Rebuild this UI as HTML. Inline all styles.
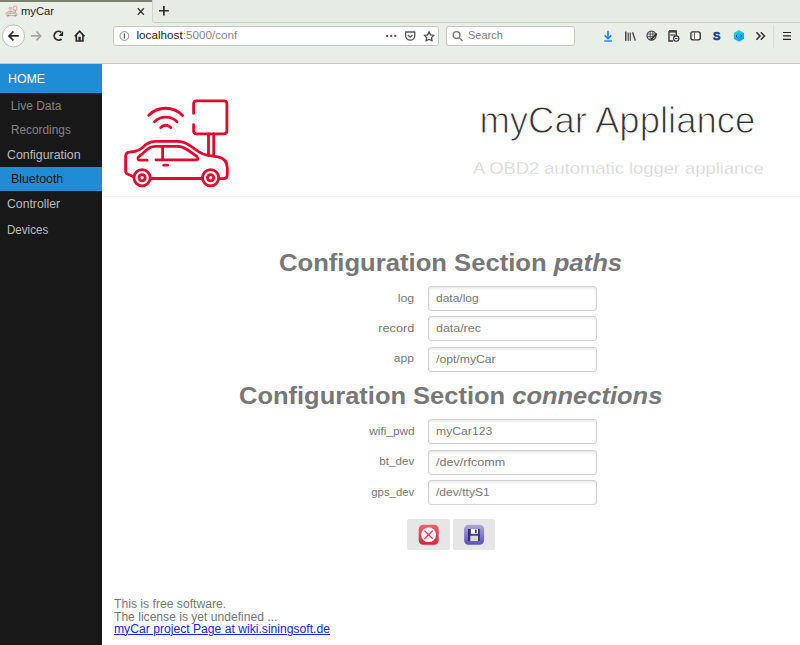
<!DOCTYPE html>
<html><head><meta charset="utf-8">
<style>
*{margin:0;padding:0;box-sizing:border-box}
html,body{width:800px;height:645px;overflow:hidden;background:#fff;font-family:"Liberation Sans",sans-serif}
.a{position:absolute}
.t{position:absolute;white-space:nowrap;line-height:1;transform-origin:0 0}
#chrome{left:0;top:0;width:800px;height:64px;background:#e9eee7}
#topline{left:0;top:0;width:153px;height:2px;background:#78826f}
#tabline{left:152px;top:-2px;width:650px;height:25px;background:#e6ebe4;border-left:1px solid #d2d5cf;border-bottom:1px solid #c9cdc6;border-bottom-left-radius:3px}
#tbline{left:0;top:63px;width:800px;height:1px;background:#c9cac5}
.box{position:absolute;background:#fff;border:1px solid #c5c7c2;border-radius:3px}
#menu{left:0;top:64px;width:102px;height:581px;background:#191818}
.blue{position:absolute;background:#1f8dd6;left:0;width:102px}
.mi{color:#858585}
.inp{position:absolute;left:428px;width:169px;height:25px;border:1px solid #d2d2d2;border-radius:3px;box-shadow:inset 0 1px 3px #e2e2e2;background:#fff}
.lbl{color:#777}
.val{color:#777}
.btn{position:absolute;top:519px;height:31px;background:#e6e6e6;border-radius:2px}
</style></head>
<body>
<div id="chrome" class="a"></div>
<div id="topline" class="a"></div>
<div id="tabline" class="a"></div>
<div id="tbline" class="a"></div>

<!-- tab -->
<div class="box" style="left:113px;top:26px;width:326px;height:20px"></div>
<div class="box" style="left:446px;top:26px;width:129px;height:20px"></div>

<div class="t" style="left:21.4px;top:7.1px;font-size:10px;color:#1c1c1c;transform:scaleX(1.12)">myCar</div>
<svg class="a" style="left:0;top:0" width="800" height="64" viewBox="0 0 800 64">
<g fill="none" stroke="#333" stroke-width="1.3" stroke-linecap="butt">
<path d="M137.8 8.3 L143.9 14.8 M143.9 8.3 L137.8 14.8"/>
</g>
<g fill="none" stroke="#2e2e2e" stroke-width="1.7">
<path d="M163.9 5.9 V15.6 M159 10.75 H168.8"/>
</g>
<!-- back -->
<circle cx="13.5" cy="35.9" r="11.1" fill="#fdfdfd" stroke="#babdb8" stroke-width="1"/>
<g fill="none" stroke="#2b2b2b" stroke-width="1.7" stroke-linecap="butt" stroke-linejoin="miter">
<path d="M9 35.9 H18.8 M13.4 31.5 L9 35.9 L13.4 40.3"/>
</g>
<g fill="none" stroke="#a3a5a1" stroke-width="1.7">
<path d="M30.9 35.9 H40.6 M36.5 31.5 L40.6 35.9 L36.5 40.3"/>
</g>
<!-- reload -->
<path d="M61.3 32.3 A4.4 4.4 0 1 0 61.6 39" fill="none" stroke="#2b2b2b" stroke-width="1.8"/>
<path d="M58.6 35.9 H63.1 V31 Z" fill="#2b2b2b"/>
<!-- home -->
<path d="M74.8 36.3 L79.6 31.2 L84.4 36.3" fill="none" stroke="#2b2b2b" stroke-width="1.7" stroke-linejoin="miter"/>
<path d="M76.3 35 V41 H82.9 V35" fill="none" stroke="#2b2b2b" stroke-width="1.7"/>
<rect x="78.4" y="36.8" width="2.4" height="4" fill="#2b2b2b"/>
<!-- info -->
<circle cx="124.4" cy="36" r="4.4" fill="none" stroke="#8a8a8a" stroke-width="1"/>
<path d="M124.4 33.6 V38.6" stroke="#555" stroke-width="1.2"/>
<!-- dots -->
<g fill="#4a4a4a"><circle cx="387.1" cy="35.9" r="1.15"/><circle cx="391.2" cy="35.9" r="1.15"/><circle cx="395.3" cy="35.9" r="1.15"/></g>
<!-- pocket -->
<path d="M405.6 32 H414.8 V35.5 A4.6 4.6 0 0 1 405.6 35.5 Z" fill="none" stroke="#555" stroke-width="1.3" stroke-linejoin="round"/>
<path d="M407.9 35 L410.2 37.2 L412.5 35" fill="none" stroke="#555" stroke-width="1.3"/>
<!-- star -->
<path d="M429.1 31.8 L430.6 34.9 L433.9 35.3 L431.5 37.6 L432.1 40.9 L429.1 39.3 L426.1 40.9 L426.7 37.6 L424.3 35.3 L427.6 34.9 Z" fill="none" stroke="#4e4e4e" stroke-width="1.3" stroke-linejoin="round"/>
<!-- search magnifier -->
<circle cx="456.6" cy="35.1" r="3.4" fill="none" stroke="#777" stroke-width="1.3"/>
<path d="M459.1 37.6 L462.6 41" stroke="#777" stroke-width="1.4"/>
<!-- download -->
<g fill="none" stroke="#1e88ff" stroke-width="1.6">
<path d="M608 30.8 V38.6 M604.7 35.4 L608 38.7 L611.3 35.4"/>
<path d="M604.2 41 H612" stroke-width="1.5"/>
</g>
<!-- library -->
<g fill="#454545">
<rect x="625" y="31.5" width="1.5" height="9.3"/>
<rect x="627.6" y="32.5" width="1.3" height="8.3" fill="#5a5a5a"/>
<rect x="629.7" y="32.5" width="1.3" height="8.3" fill="#5a5a5a"/>
</g>
<path d="M632.6 32.3 L635.3 40.6" stroke="#454545" stroke-width="1.4"/>
<!-- globe/pencil -->
<circle cx="651.5" cy="35.6" r="4.5" fill="none" stroke="#444" stroke-width="1.3"/>
<path d="M647.2 34 H655 M647.2 36.6 H653 M650.2 31.5 V39.5 M652.8 31.5 V36" stroke="#555" stroke-width="0.9"/>
<path d="M656.8 33.6 L651 39.6" stroke="#333" stroke-width="1.8"/>
<!-- screenshot -->
<path d="M669 31 H676.2 V36 M669 31 V41 H673" fill="none" stroke="#333" stroke-width="1.4"/>
<rect x="669" y="30.6" width="7.2" height="2" fill="#444"/>
<rect x="670.3" y="34" width="5" height="2" fill="#888"/>
<circle cx="676.2" cy="38.6" r="2.7" fill="#f2f2f2" stroke="#333" stroke-width="1.1"/>
<path d="M674.9 38.6 H677.5" stroke="#333" stroke-width="1"/>
<!-- sidebar -->
<rect x="690.9" y="31.9" width="9.3" height="8" rx="1.8" fill="#fff" stroke="#333" stroke-width="1.4"/>
<path d="M694.5 32 V39.9" stroke="#666" stroke-width="1"/><path d="M692.2 34 H693.6 M692.2 35.8 H693.6" stroke="#999" stroke-width="0.8"/>
<!-- S -->
<text x="713" y="40.2" font-family="Liberation Sans" font-weight="bold" font-size="11" fill="#173c96" stroke="#173c96" stroke-width="0.6">S</text>
<!-- hexagon -->
<defs><linearGradient id="hx" x1="0" y1="0" x2="0.4" y2="1"><stop offset="0" stop-color="#22dcfa"/><stop offset="1" stop-color="#0c9cf0"/></linearGradient></defs>
<path d="M738.9 30.1 L744 33 V38.8 L738.9 41.8 L733.8 38.8 V33 Z" fill="url(#hx)"/>
<path d="M737.3 34.9 L736 36.1 L737.3 37.3 M740.5 34.5 L741.8 35.7 L740.5 36.9" fill="none" stroke="#2a3a55" stroke-width="1"/>
<!-- chevrons -->
<path d="M756.4 32.3 L760 36 L756.4 39.7 M760.8 32.3 L764.4 36 L760.8 39.7" fill="none" stroke="#333" stroke-width="1.6"/>
<!-- separator -->
<path d="M773.5 25 V47.5" stroke="#d8dbd5" stroke-width="1"/>
<!-- hamburger -->
<path d="M783 32.5 H791 M783 35.9 H791 M783 39.3 H791" stroke="#222" stroke-width="1.2"/>
</svg>
<svg class="a" style="left:0;top:0" width="20" height="20" viewBox="0 0 20 20"><use href="#car" transform="translate(-6.97,-5.82) scale(0.105,0.12)" stroke-width="5" opacity="0.55"/></svg>

<div class="t" style="left:136.5px;top:29.4px;font-size:11.7px;color:#1e1e1e">localhost<span style="color:#888">:5000/conf</span></div>
<div class="t" style="left:468.4px;top:29.9px;font-size:11.3px;color:#808080;transform:scaleX(0.97)">Search</div>

<!-- menu -->
<div id="menu" class="a"></div>
<div class="blue" style="top:64px;height:29px"></div>
<div class="blue" style="top:167px;height:24px"></div>
<div class="t" style="left:8.2px;top:71.6px;font-size:13.6px;color:#fff;transform:scaleX(0.91)">HOME</div>
<div class="t mi" style="left:10.8px;top:100.2px;font-size:12px">Live Data</div>
<div class="t mi" style="left:10.8px;top:124.1px;font-size:12px;transform:scaleX(0.985)">Recordings</div>
<div class="t" style="left:6.6px;top:148.5px;font-size:12px;color:#bdbdbd;transform:scaleX(1.03)">Configuration</div>
<div class="t" style="left:10.7px;top:173px;font-size:12px;color:#111;transform:scaleX(1.03)">Bluetooth</div>
<div class="t" style="left:6.6px;top:197.9px;font-size:12px;color:#bdbdbd;transform:scaleX(1.02)">Controller</div>
<div class="t" style="left:6.8px;top:223.9px;font-size:12px;color:#bdbdbd;transform:scaleX(0.965)">Devices</div>

<!-- car icon -->
<svg class="a" style="left:110px;top:90px" width="130" height="105" viewBox="110 90 130 105" stroke-linecap="round" stroke-linejoin="round">
<defs><g id="car" stroke="#de0b2f" fill="none" stroke-linecap="round" stroke-linejoin="round">
<path d="M148.7 115.2 A23.9 23.9 0 0 1 182.7 115.5"/>
<path d="M154.5 121.7 A16 16 0 0 1 177 121.7"/>
<path d="M160.7 127.6 A6.6 6.6 0 0 1 170.8 127.6"/>
<path d="M193.6 113.4 V103.8 Q193.6 100.8 196.6 100.8 H223.9 Q226.9 100.8 226.9 103.8 V130.8 Q226.9 133.8 223.9 133.8 H196.6 Q193.6 133.8 193.6 130.8 V124.7"/>
<path d="M208.5 134 V155.2 M213.7 134 V155.8"/>
<path d="M133.6 176.8 L128 174.3 Q125.6 173.3 125.6 171 V156.5 Q125.6 152.6 129.5 152.1 L134.5 151.5 Q138.5 150.8 142 148 Q148 141.6 155 141.4 H177 Q184 141.4 190 145.6 L199 151.8 Q203 154.6 208 155.3 L218 156.8 Q227.3 158.5 227.3 168 V174.5 Q227.3 178.6 223.3 178.6 H220.3"/>
<path d="M151.4 178.5 H201.3"/>
<circle cx="142.1" cy="177.8" r="8.15"/>
<circle cx="142.1" cy="177.8" r="3.1"/>
<circle cx="210.6" cy="177.8" r="8.15"/>
<circle cx="210.6" cy="177.8" r="3.1"/>
<path d="M147.1 160.2 H140.6 Q137 160.2 138.3 157.2 Q140 155.5 141.5 154.5 L146.5 150 Q150.5 146.3 156 146.3 H177.5 Q182.5 146.3 187 149.5 L196.5 156.2 Q200 159.9 195.5 159.9 H156"/>
<path d="M162.6 146.6 V159.8"/>
<path d="M163.8 165.2 H167.6"/>
</g></defs>
<use href="#car" stroke-width="2.8"/>
</svg>

<!-- header -->
<div class="a" style="left:103px;top:196px;width:697px;height:1px;background:#eee"></div>
<div class="t" style="left:479.4px;top:103px;font-size:36.5px;color:#333;-webkit-text-stroke:0.95px #fff;transform:scaleX(1.0)">myCar Appliance</div>
<div class="t" style="left:473px;top:160px;font-size:17px;color:#d2d2d2;-webkit-text-stroke:0.3px #fff;transform:scaleX(1.079)">A OBD2 automatic logger appliance</div>

<!-- headings -->
<div class="t" style="left:279px;top:252px;font-size:23px;font-weight:bold;color:#777;transform:scaleX(1.114)">Configuration Section <i>paths</i></div>
<div class="t" style="left:239.2px;top:385px;font-size:23px;font-weight:bold;color:#777;transform:scaleX(1.108)">Configuration Section <i>connections</i></div>

<!-- form 1 -->
<div class="inp" style="top:286px"></div>
<div class="inp" style="top:316px"></div>
<div class="inp" style="top:347px"></div>
<div class="inp" style="top:419px"></div>
<div class="inp" style="top:450px"></div>
<div class="inp" style="top:480px"></div>


<!-- labels -->
<div class="t lbl" style="right:385.7px;top:292.8px;font-size:11.4px;transform-origin:100% 0;transform:scaleX(1.087)">log</div>
<div class="t lbl" style="right:385.7px;top:323px;font-size:11.4px;transform-origin:100% 0;transform:scaleX(1.116)">record</div>
<div class="t lbl" style="right:385.7px;top:353.3px;font-size:11.4px;transform-origin:100% 0;transform:scaleX(1.06)">app</div>
<div class="t lbl" style="right:385.7px;top:425.9px;font-size:11.4px;transform-origin:100% 0;transform:scaleX(1.04)">wifi_pwd</div>
<div class="t lbl" style="right:385.7px;top:456.3px;font-size:11.4px;transform-origin:100% 0;transform:scaleX(1.02)">bt_dev</div>
<div class="t lbl" style="right:385.7px;top:486.8px;font-size:11.4px;transform-origin:100% 0">gps_dev</div>
<!-- values -->
<div class="t val" style="left:435.8px;top:292.9px;font-size:10.8px;transform:scaleX(1.11)">data/log</div>
<div class="t val" style="left:435.8px;top:323.1px;font-size:10.8px;transform:scaleX(1.15)">data/rec</div>
<div class="t val" style="left:435.8px;top:353.6px;font-size:10.8px;transform:scaleX(1.13)">/opt/myCar</div>
<div class="t val" style="left:435.8px;top:426.1px;font-size:10.8px;transform:scaleX(1.13)">myCar123</div>
<div class="t val" style="left:435.8px;top:456.6px;font-size:10.8px;transform:scaleX(1.165)">/dev/rfcomm</div>
<div class="t val" style="left:435.8px;top:487.2px;font-size:10.8px;transform:scaleX(1.12)">/dev/ttyS1</div>

<!-- buttons -->
<div class="btn" style="left:407px;width:43px"></div>
<div class="btn" style="left:453px;width:42px"></div>


<svg class="a" style="left:400px;top:515px" width="100" height="40" viewBox="400 515 100 40">
<defs>
<linearGradient id="rg" x1="0" y1="0" x2="0" y2="1"><stop offset="0" stop-color="#f06268"/><stop offset="1" stop-color="#cd2944"/></linearGradient>
<linearGradient id="bg" x1="0" y1="0" x2="0" y2="1"><stop offset="0" stop-color="#aca8d6"/><stop offset="1" stop-color="#5852ba"/></linearGradient>
<linearGradient id="fb" x1="0" y1="0" x2="1" y2="0"><stop offset="0" stop-color="#2c2a66"/><stop offset="0.5" stop-color="#54528e"/><stop offset="1" stop-color="#34326e"/></linearGradient>
</defs>
<rect x="418.7" y="524.7" width="20" height="20" rx="4.5" fill="url(#rg)"/>
<circle cx="428.6" cy="534.7" r="7.4" fill="#fbfbfb"/>
<path d="M424.4 530.6 L432.7 538.8 M432.7 530.6 L424.4 538.8" stroke="#d23a4c" stroke-width="1.3"/>
<rect x="464.1" y="524.7" width="20" height="20" rx="4.5" fill="url(#bg)"/>
<rect x="468" y="529" width="11.8" height="12" fill="url(#fb)"/>
<rect x="470.9" y="529" width="7.1" height="4.8" fill="#f4f4f6"/>
<rect x="475" y="529.6" width="1.7" height="3.5" fill="#3a3870"/>
<rect x="470.3" y="535.8" width="7.7" height="5.2" fill="#d6d6de"/>
</svg>

<!-- footer -->
<div class="t" style="left:114.3px;top:598px;font-size:12px;color:#777;transform:scaleX(1.013)">This is free software.</div>
<div class="t" style="left:114.3px;top:611px;font-size:12px;color:#777;transform:scaleX(1.008)">The license is yet undefined ...</div>
<div class="t" style="left:114.3px;top:623px;font-size:12px;color:#2222ee;text-decoration:underline;text-decoration-thickness:1px;transform:scaleX(1.012)">myCar project Page at wiki.siningsoft.de</div>
</body></html>
